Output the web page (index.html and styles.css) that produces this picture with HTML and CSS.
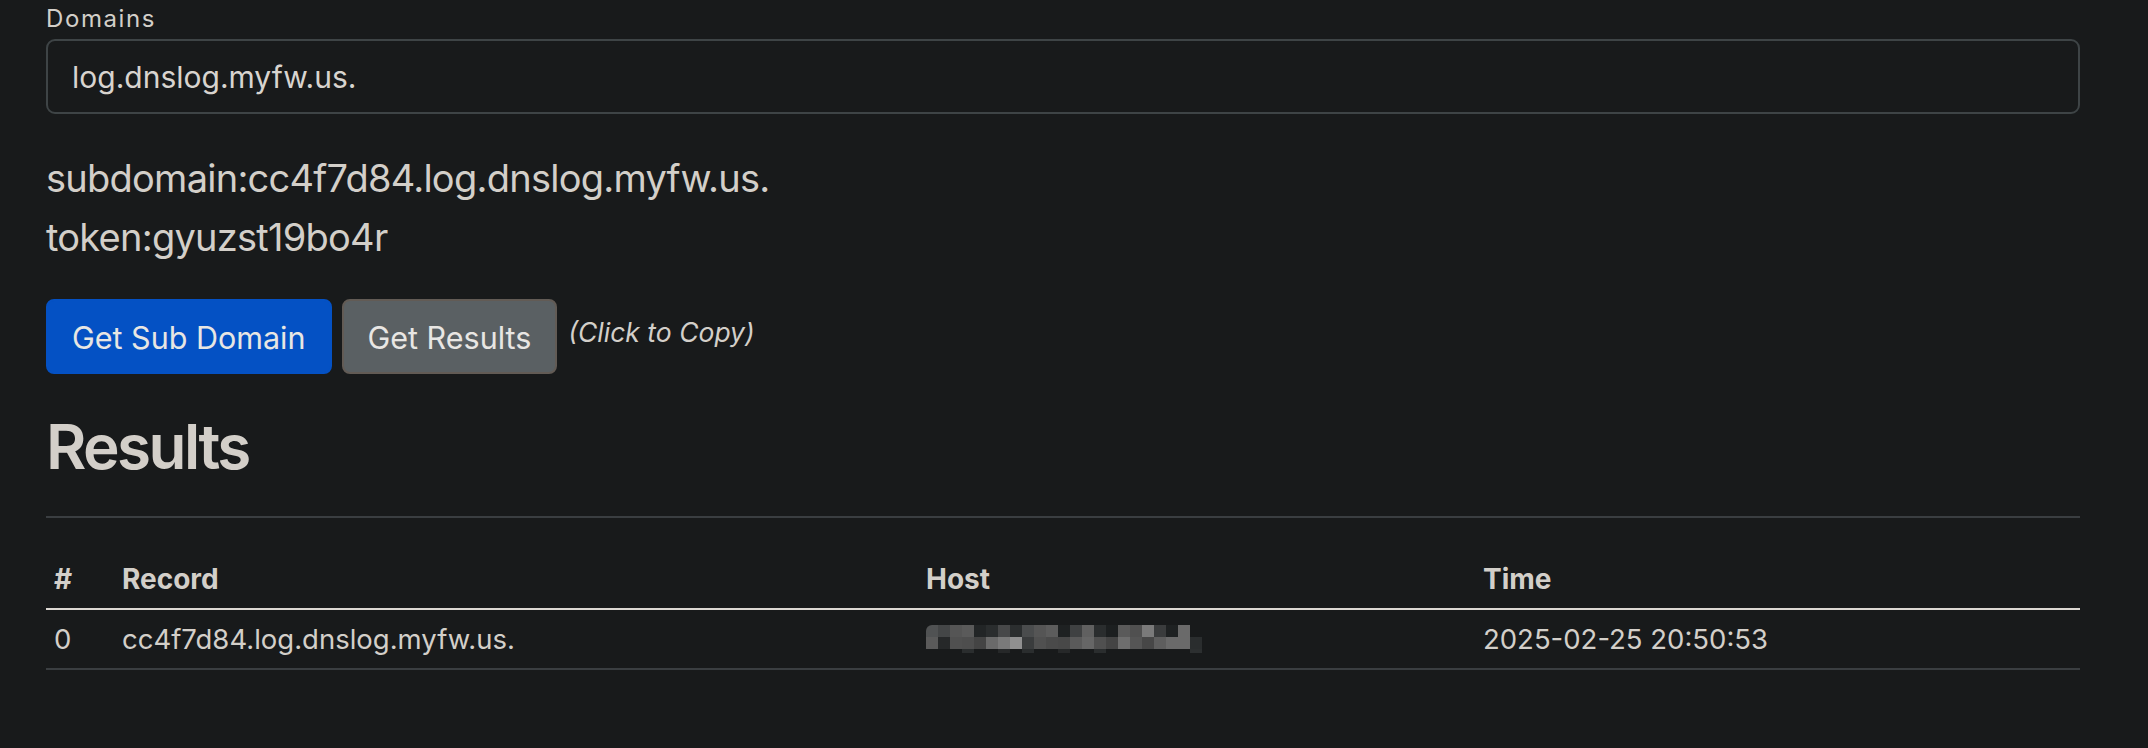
FILE: index.html
```html
<!DOCTYPE html>
<html lang="en">
<head>
<meta charset="utf-8">
<title>DNSLog</title>
<link rel="stylesheet" href="styles.css">
</head>
<body>
<div class="container">
  <div class="field">
    <label class="form-label" for="domains">Domains</label>
    <div class="form-control" id="domains">log.dnslog.myfw.us.</div>
  </div>
  <p class="lead">subdomain:cc4f7d84.log.dnslog.myfw.us.<br>token:gyuzst19bo4r</p>
  <div class="actions">
    <button class="btn btn-primary">Get Sub Domain</button>
    <button class="btn btn-secondary">Get Results</button>
    <small class="hint"><em>(Click to Copy)</em></small>
  </div>
  <h2 class="section-title">Results</h2>
  <hr class="divider">
  <table class="table">
    <thead>
      <tr>
        <th class="col-idx">#</th>
        <th class="col-record">Record</th>
        <th class="col-host">Host</th>
        <th class="col-time">Time</th>
      </tr>
    </thead>
    <tbody>
      <tr>
        <td>0</td>
        <td>cc4f7d84.log.dnslog.myfw.us.</td>
        <td><div class="redacted"><div class="px-row r1"></div><div class="px-row r2"></div><div class="px-row r3"></div></div></td>
        <td>2025-02-25 20:50:53</td>
      </tr>
    </tbody>
  </table>
</div>
</body>
</html>
```
FILE: styles.css
```css
html, body {
  margin: 0;
  padding: 0;
  background: #181a1b;
}
body {
  font-family: Inter, "Liberation Sans", sans-serif;
  color: #d3cfc9;
  font-size: 32px;
  line-height: 1.5;
}
.container {
  padding: 0 68px 0 46px;
}
.form-label {
  display: block;
  font-size: 24px;
  line-height: 36px;
  letter-spacing: 1.6px;
  margin-top: 1px;
  margin-bottom: 2px;
}
.form-control {
  box-sizing: border-box;
  height: 75px;
  border: 2px solid #3e4446;
  border-radius: 9px;
  background: #181a1b;
  padding: 1px 24px 0;
  display: flex;
  align-items: center;
  font-size: 30px;
  color: #d8d4cf;
}
.lead {
  font-size: 38px;
  line-height: 59px;
  letter-spacing: -0.75px;
  margin: 35px 0 32px;
}
.actions {
  display: flex;
  align-items: center;
  gap: 10px;
  height: 75px;
}
.btn {
  box-sizing: border-box;
  height: 75px;
  font-family: inherit;
  font-size: 30.5px;
  line-height: 48px;
  padding: 2px 24px 0;
  border-radius: 8px;
  border: 2px solid transparent;
  color: #e8e6e3;
}
.btn-primary {
  background: #0451c4;
  border-color: #0451c4;
}
.btn-secondary {
  background: #5a6063;
  border-color: #625b55;
}
.hint {
  font-size: 26.5px;
  margin-left: 1px;
  padding-bottom: 7px;
}
.section-title {
  font-size: 62px;
  font-weight: 600;
  letter-spacing: -2.6px;
  line-height: 77px;
  margin: 34px 0 0;
}
.divider {
  border: 0;
  border-top: 2px solid #3a3e41;
  margin: 31px 0 32px;
}
.table {
  width: 100%;
  border-collapse: collapse;
  font-size: 27.5px;
  line-height: 42px;
}
.table th, .table td {
  text-align: left;
  padding: 8px 8px;
}
.table th {
  font-size: 28px;
  font-weight: 700;
  border-bottom: 2px solid #dcd8d3;
}
.table td {
  border-bottom: 2px solid #3a3e41;
}
.col-idx { width: 52px; }
.col-record { width: 788px; }
.col-host { width: 541px; }
.redacted {
  width: 276px;
  height: 28px;
}
.px-row { height: 12px; }
.r3 { height: 4px; }
.r1 {
  background: linear-gradient(90deg, #505253 0 12px, #444647 12px 24px, #555 24px 36px, #5a5a5a 36px 48px, #222526 48px 60px, #2a2d2e 60px 72px, #474849 72px 84px, #2b2e2f 84px 96px, #4a4c4d 96px 108px, #555 108px 120px, #5c5c5c 120px 132px, #1e2122 132px 144px, #3f4142 144px 156px, #606060 156px 168px, #2a2d2e 168px 180px, #1c1f20 180px 192px, #5a5a5a 192px 204px, #505050 204px 216px, #7a7a7a 216px 228px, #3a3c3d 228px 240px, #1e2122 240px 252px, #6a6a6a 252px 264px, transparent 264px);
  border-top-left-radius: 6px;
}
.r2 {
  background: linear-gradient(90deg, #5a5a5a 0 12px, #262829 12px 24px, #505050 24px 36px, #4e4e4e 36px 48px, #444 48px 60px, #6a6a6a 60px 72px, #7a7a7a 72px 84px, #909090 84px 96px, #3a3c3d 96px 108px, #505050 108px 120px, #4a4a4a 120px 132px, #484848 132px 144px, #5a5a5a 144px 156px, #666 156px 168px, #505050 168px 180px, #444 180px 192px, #6e6e6e 192px 204px, #555 204px 216px, #474747 216px 228px, #5e5e5e 228px 240px, #6a6a6a 240px 252px, #6a6a6a 252px 264px, #2a2d2e 264px 276px);
}
.r3 {
  background: linear-gradient(90deg, transparent 0 36px, #2a2d2e 36px 48px, transparent 48px 72px, #262829 72px 84px, transparent 84px 96px, #2a2d2e 96px 108px, transparent 108px 132px, #262829 132px 144px, transparent 144px 168px, #2a2d2e 168px 180px, transparent 180px 264px, #2c2f30 264px 276px);
}
```
